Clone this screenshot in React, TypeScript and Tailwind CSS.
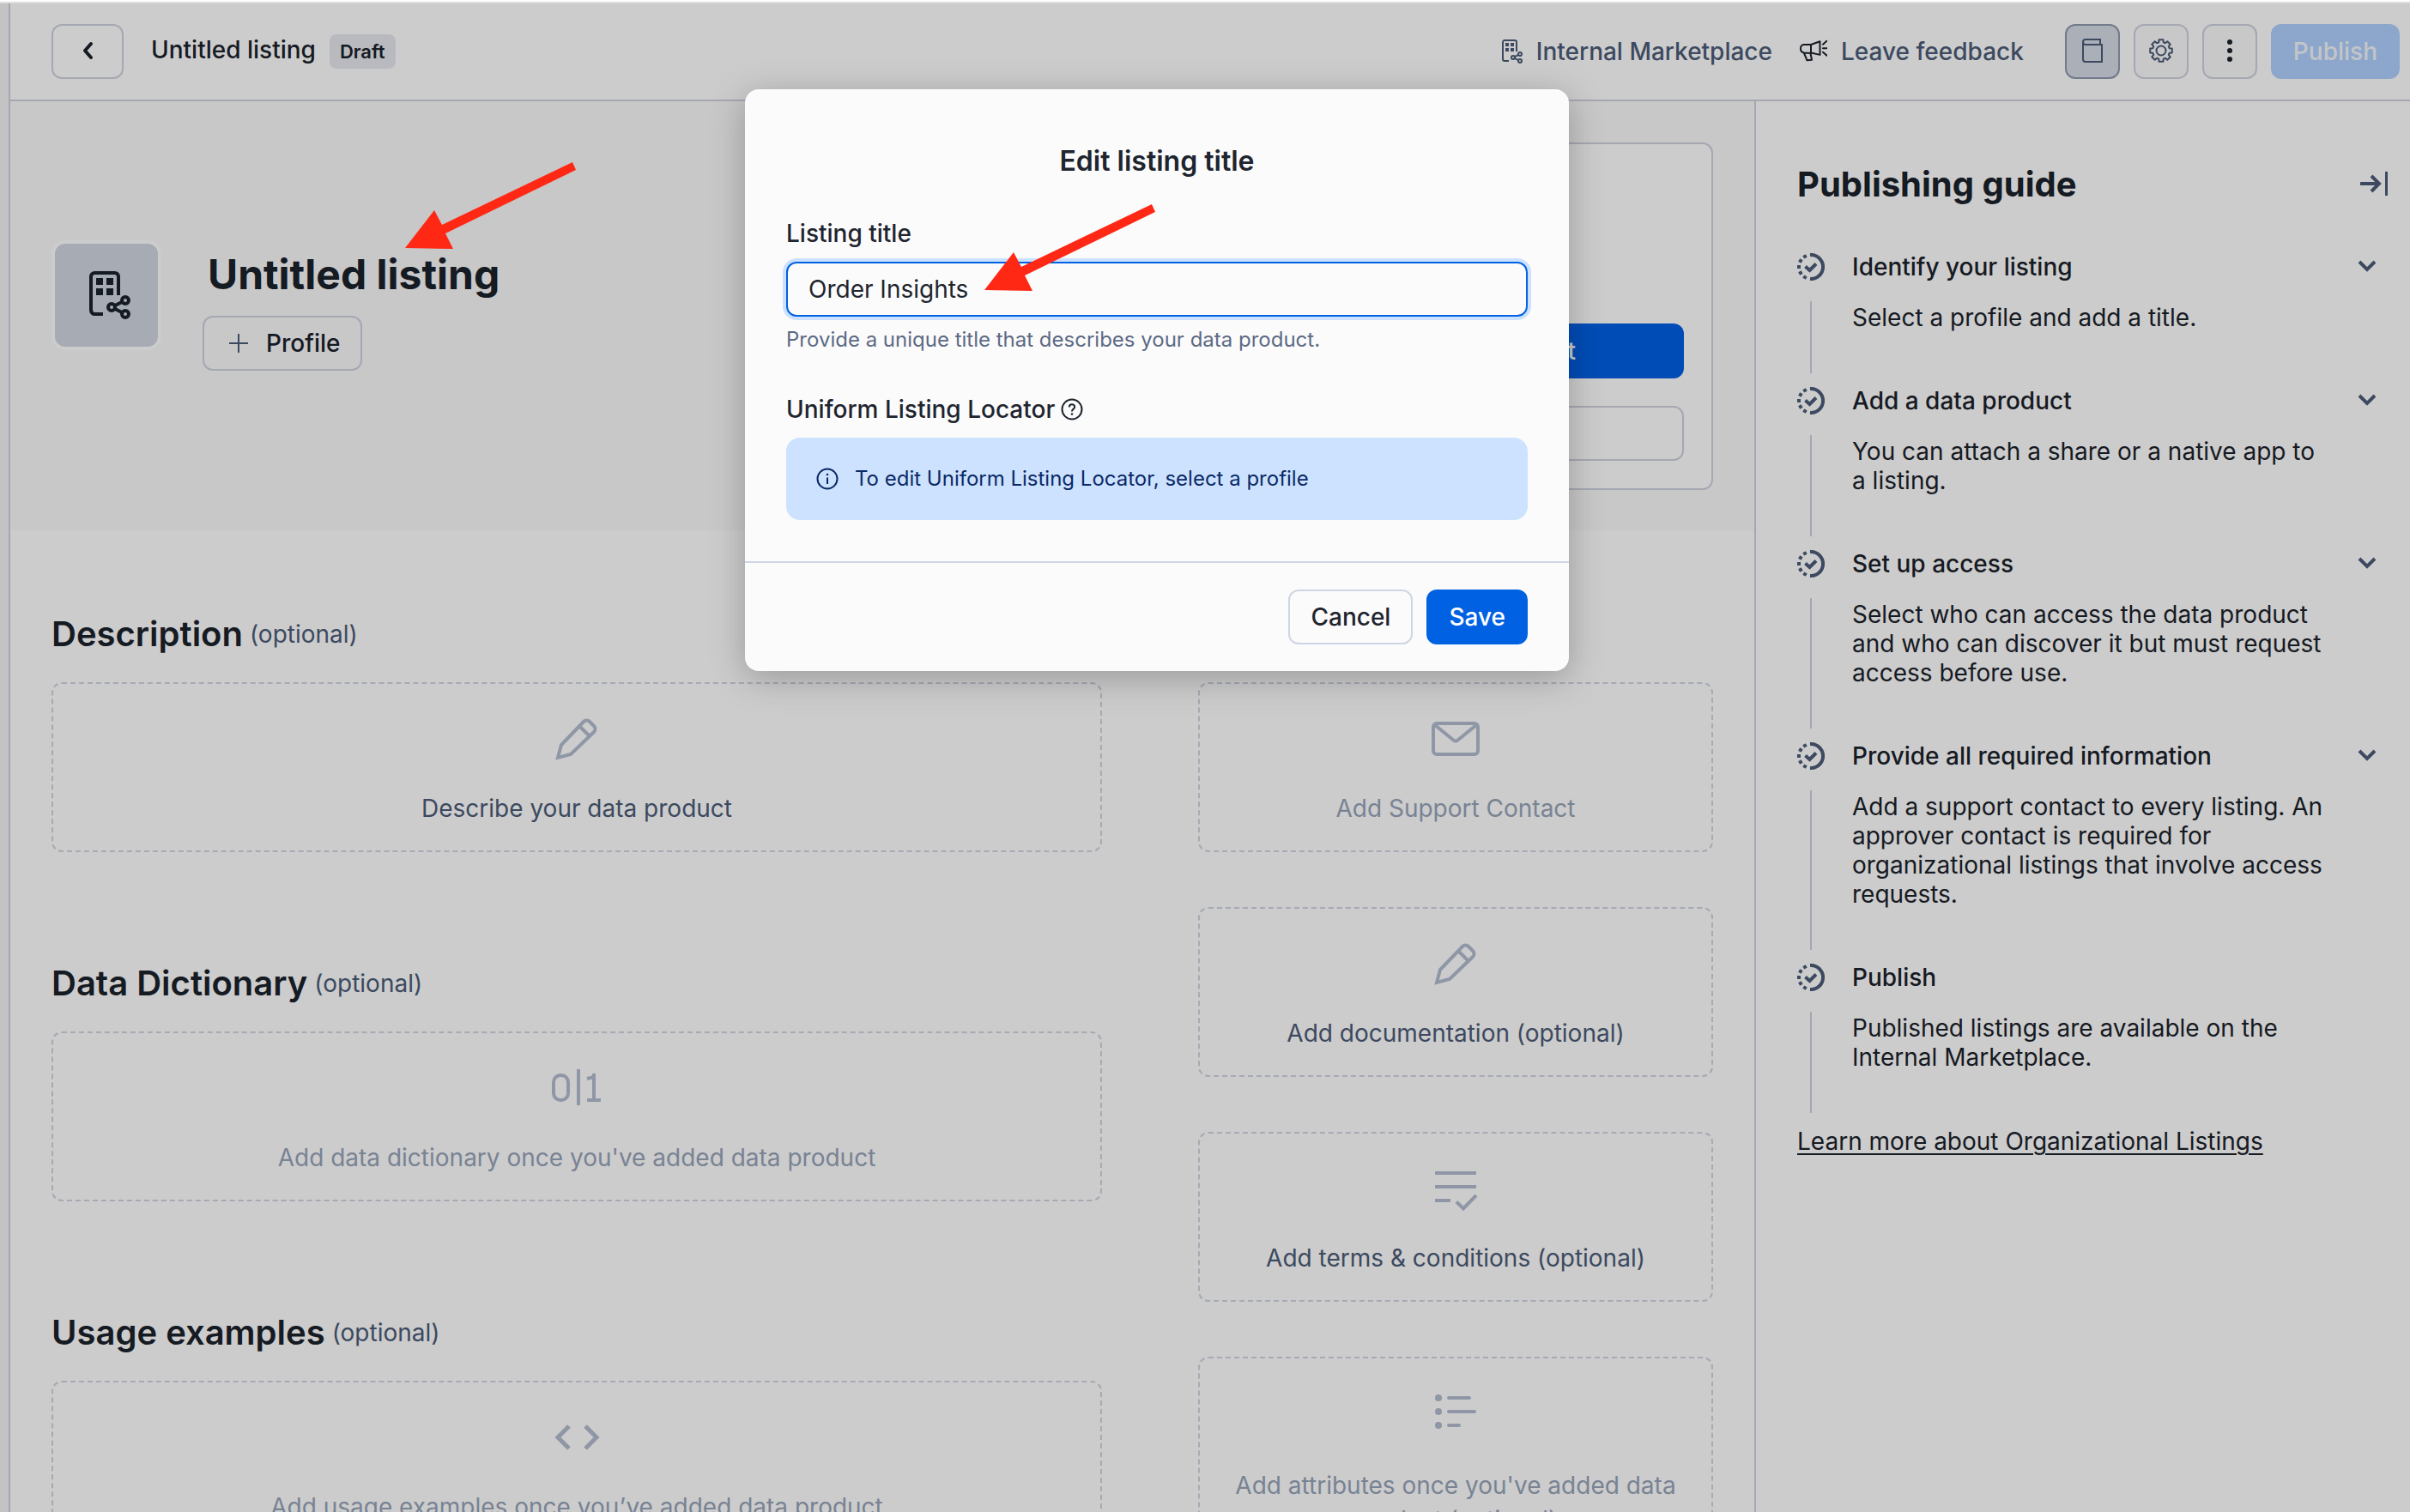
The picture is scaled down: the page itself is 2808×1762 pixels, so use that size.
import React from "react";

type IconProps = { className?: string };

function BuildingShareIcon({ className }: IconProps) {
  return (
    <svg viewBox="0 0 16 16" className={className} fill="none" stroke="currentColor" aria-hidden="true">
      <path d="M11.5 8V2.6a1.1 1.1 0 0 0-1.1-1.1H4.6a1.1 1.1 0 0 0-1.1 1.1v9.8a1.1 1.1 0 0 0 1.1 1.1H7" />
      <path d="M5 3h2v2H5zM8 3h2v2H8zM5 6h2v2H5zM8 6h2v2H8z" fill="currentColor" stroke="none" />
      <circle cx="9.5" cy="11.5" r="1" />
      <circle cx="13.5" cy="9.5" r="1" />
      <circle cx="13.5" cy="13.5" r="1" />
      <path d="M10.4 11.05l2.2-1.1M10.4 11.95l2.2 1.1" />
    </svg>
  );
}

function MegaphoneIcon({ className }: IconProps) {
  return (
    <svg viewBox="0 0 32 32" className={className} fill="none" stroke="currentColor" strokeWidth="2" strokeLinejoin="round" strokeLinecap="round" aria-hidden="true">
      <path d="M13 8H5a4 4 0 0 0-4 4v1c0 2.500 1.500 4 4 4.500L13 18zM13 8l10.500-3.700v15.600L13 17.500M5 18l3.500 8.300 5.500-.5-1.500-7.800" />
      <path d="M27 7.700l4.500-4M27 12.300h5M27 16.700l4.500 4" />
    </svg>
  );
}

function BookIcon({ className }: IconProps) {
  return (
    <svg viewBox="0 0 32 32" className={className} fill="none" stroke="currentColor" strokeWidth="2" aria-hidden="true">
      <path d="M25 8V2H8a3 3 0 0 0 0 6h19v20H8a3 3 0 0 1-3-3V5" />
    </svg>
  );
}

const gearPath = (() => {
  const points: string[] = [];
  const add = (radius: number, degrees: number) => {
    const angle = (degrees * Math.PI) / 180;
    points.push(`${(16 + radius * Math.cos(angle)).toFixed(2)} ${(15 + radius * Math.sin(angle)).toFixed(2)}`);
  };
  for (let tooth = 0; tooth < 8; tooth++) {
    const centre = tooth * 45;
    add(10, centre - 16);
    add(13, centre - 11);
    add(13, centre + 11);
    add(10, centre + 16);
  }
  return `M${points.join("L")}Z`;
})();

function GearIcon({ className }: IconProps) {
  return (
    <svg viewBox="0 0 32 32" className={className} fill="none" stroke="currentColor" strokeWidth="2" strokeLinejoin="round" aria-hidden="true">
      <path d={gearPath} />
      <circle cx="16" cy="15" r="5.500" />
    </svg>
  );
}

function DotsIcon({ className }: IconProps) {
  return (
    <svg viewBox="0 0 32 32" className={className} fill="currentColor" aria-hidden="true">
      <circle cx="16" cy="5" r="3" />
      <circle cx="16" cy="15" r="3" />
      <circle cx="16" cy="25" r="3" />
    </svg>
  );
}

function BackIcon({ className }: IconProps) {
  return (
    <svg viewBox="0 0 32 32" className={className} fill="none" stroke="currentColor" strokeWidth="4" strokeLinecap="round" strokeLinejoin="round" aria-hidden="true">
      <path d="M20 7l-7 8 7 8" />
    </svg>
  );
}

function PlusIcon({ className }: IconProps) {
  return (
    <svg viewBox="0 0 24 24" className={className} fill="none" stroke="currentColor" strokeWidth="2" aria-hidden="true">
      <path d="M12 1v22M1 12h22" />
    </svg>
  );
}

function CollapseIcon({ className }: IconProps) {
  return (
    <svg viewBox="0 0 32 32" className={className} fill="none" stroke="currentColor" strokeWidth="4" aria-hidden="true">
      <path d="M0 15h22M13 6l9 9-9 9" />
      <path d="M30.500 1v28" strokeWidth="3" />
    </svg>
  );
}

function ChevronIcon({ className }: IconProps) {
  return (
    <svg viewBox="0 0 32 32" className={className} fill="none" stroke="currentColor" strokeWidth="4" aria-hidden="true">
      <path d="M7 10l9 9 9-9" />
    </svg>
  );
}

function ProgressCheckIcon({ className }: IconProps) {
  return (
    <svg viewBox="0 0 32 32" className={className} fill="none" stroke="currentColor" strokeWidth="4" aria-hidden="true">
      <path d="M15 2.040A14 14 0 1 1 15 29.960" />
      <path d="M9.500 15.500l5 4.500 7.500-7.500" />
      <g fill="currentColor" stroke="none">
        {[-60, -30, 0, 30, 60].map((angle) => (
          <rect key={angle} x="0" y="14" width="4" height="4" transform={`rotate(${angle} 16 16)`} />
        ))}
      </g>
    </svg>
  );
}

function HelpIcon({ className }: IconProps) {
  return (
    <svg viewBox="0 0 28 28" className={className} fill="none" stroke="currentColor" strokeWidth="2" aria-hidden="true">
      <circle cx="14" cy="14" r="11.500" />
      <path d="M10.800 11.500c0-4.300 6.400-4.300 6.400-.3 0 2.300-3.200 2.600-3.200 5.200" />
      <circle cx="14" cy="19.500" r="1.300" fill="currentColor" stroke="none" />
    </svg>
  );
}

function InfoIcon({ className }: IconProps) {
  return (
    <svg viewBox="0 0 32 32" className={className} fill="none" stroke="currentColor" strokeWidth="2" aria-hidden="true">
      <circle cx="16" cy="16" r="11.500" />
      <path d="M16 14.500v7.500" />
      <circle cx="16" cy="11" r="1.300" fill="currentColor" stroke="none" />
    </svg>
  );
}

function PencilIcon({ className }: IconProps) {
  return (
    <svg viewBox="0 0 64 64" className={className} fill="none" stroke="currentColor" strokeWidth="4" aria-hidden="true">
      <path d="M10 54l4-15L40 12a5 5 0 0 1 7 0l5 5a5 5 0 0 1 0 7L25 50zM35 17l12 12" />
    </svg>
  );
}

function EnvelopeIcon({ className }: IconProps) {
  return (
    <svg viewBox="0 0 64 64" className={className} fill="none" stroke="currentColor" strokeWidth="4" strokeLinejoin="round" aria-hidden="true">
      <rect x="6" y="14" width="52" height="36" rx="4" />
      <path d="M8 16l21.500 17.500a4 4 0 0 0 5 0L56 16" />
    </svg>
  );
}

function BinaryIcon({ className }: IconProps) {
  return (
    <svg viewBox="0 0 64 64" className={className} fill="none" stroke="currentColor" strokeWidth="4" aria-hidden="true">
      <rect x="5" y="17" width="17" height="29" rx="8" />
      <line x1="34" y1="10" x2="34" y2="52" />
      <polyline points="44,21 52,19 52,46" />
      <line x1="44" y1="46" x2="60" y2="46" />
      <line x1="52" y1="15" x2="52" y2="20" />
    </svg>
  );
}

function CodeIcon({ className }: IconProps) {
  return (
    <svg viewBox="0 0 64 64" className={className} fill="none" stroke="currentColor" strokeWidth="5" aria-hidden="true">
      <path d="M23 19L10 32l13 13M42 19l13 13-13 13" />
    </svg>
  );
}

function ListCheckIcon({ className }: IconProps) {
  return (
    <svg viewBox="0 0 64 64" className={className} fill="none" stroke="currentColor" strokeWidth="4" aria-hidden="true">
      <path d="M8 14h48M8 30h48M8 46h18M33 47.500l8 8L56 40" />
    </svg>
  );
}

function ListIcon({ className }: IconProps) {
  return (
    <svg viewBox="0 0 64 64" className={className} fill="none" stroke="currentColor" strokeWidth="4" strokeLinecap="round" aria-hidden="true">
      <path d="M24 14h24M24 30h30M24 46h12" />
      <g fill="currentColor" stroke="none">
        <circle cx="12" cy="14" r="4" />
        <circle cx="12" cy="30" r="4" />
        <circle cx="12" cy="46" r="4" />
      </g>
    </svg>
  );
}

function RedArrow({ className }: IconProps) {
  return (
    <svg viewBox="0 0 200 104" className={className} fill="#ff2815" aria-hidden="true">
      <polygon points="0,101 34,57 43,74 195,1 199,10 47,84 56,102" />
    </svg>
  );
}

const steps = [
  { title: "Identify your listing", body: "Select a profile and add a title.", open: true },
  { title: "Add a data product", body: "You can attach a share or a native app to a listing.", open: true },
  {
    title: "Set up access",
    body: "Select who can access the data product and who can discover it but must request access before use.",
    open: true,
  },
  {
    title: "Provide all required information",
    body: "Add a support contact to every listing. An approver contact is required for organizational listings that involve access requests.",
    open: true,
  },
  { title: "Publish", body: "Published listings are available on the Internal Marketplace.", open: false },
];

type CardProps = {
  icon: (props: IconProps) => React.ReactElement;
  label: string;
  disabled?: boolean;
  multiline?: boolean;
};

function PlaceholderCard({ icon: Icon, label, disabled, multiline }: CardProps) {
  return (
    <button
      type="button"
      disabled={disabled}
      className="flex w-full shrink-0 flex-col items-center gap-8 rounded-xl border-2 border-dashed border-[#cfd5e0] p-8"
    >
      <Icon className="size-16 text-[#b3bdd0]" />
      <span
        className={
          (disabled ? "text-[#97a4b9] " : "text-[#4c5c78] ") + (multiline ? "leading-10" : "leading-[34px]")
        }
      >
        {label}
      </span>
    </button>
  );
}

function Section({ title, ...card }: CardProps & { title: string }) {
  return (
    <section className="flex flex-col gap-8">
      <div className="flex h-12 items-center gap-2">
        <h2 className="text-[40px] leading-[48px] font-semibold">{title}</h2>
        <span className="text-[#4c5c78]">(optional)</span>
      </div>
      <PlaceholderCard {...card} />
    </section>
  );
}

function Header() {
  return (
    <header className="flex h-[114px] shrink-0 items-center justify-between border-b-2 border-[#cfd3df] pr-3 pl-12">
      <div className="flex items-center">
        <button
          type="button"
          aria-label="Back"
          className="flex h-16 w-[84px] items-center justify-center rounded-xl border-2 border-[#cfd3df]"
        >
          <BackIcon className="size-8" />
        </button>
        <span className="mb-1 ml-8 font-medium">Untitled listing</span>
        <span className="ml-4 flex h-10 items-center rounded-lg bg-[#e7e9ef] px-3 text-[22px] font-semibold">Draft</span>
      </div>
      <div className="flex items-center gap-4 font-medium">
        <a href="#marketplace" className="flex items-center gap-[14px] text-[#4c5c78]">
          <BuildingShareIcon className="size-8" />
          Internal Marketplace
        </a>
        <a href="#feedback" className="mr-8 ml-4 flex items-center gap-4 text-[#4c5c78]">
          <MegaphoneIcon className="size-8 text-[#1b222b]" />
          Leave feedback
        </a>
        <button
          type="button"
          aria-label="Guide"
          className="flex size-16 items-center justify-center rounded-xl border-2 border-[#8e9ab0] bg-[#d6dbe6] text-[#4c5c78]"
        >
          <BookIcon className="size-8" />
        </button>
        <button
          type="button"
          aria-label="Settings"
          className="flex size-16 items-center justify-center rounded-xl border-2 border-[#cfd3df] bg-[#fafafa] text-[#4c5c78]"
        >
          <GearIcon className="size-8" />
        </button>
        <button
          type="button"
          aria-label="More"
          className="flex size-16 items-center justify-center rounded-xl border-2 border-[#cfd3df] bg-[#fafafa]"
        >
          <DotsIcon className="size-8" />
        </button>
        <button type="button" disabled className="h-16 rounded-xl bg-[#afd0ff] px-[26px] text-[#f5f7fb]">
          Publish
        </button>
      </div>
    </header>
  );
}

function Hero() {
  return (
    <div className="grid shrink-0 grid-cols-[1fr_600px] gap-28 bg-[#fafafa] px-12 pt-12 pb-[47px]">
      <div className="flex items-start gap-12 pt-[114px]">
        <div className="flex size-32 items-center justify-center rounded-2xl border-4 border-white bg-[#d0d6e2]">
          <BuildingShareIcon className="size-16" />
        </div>
        <div className="flex flex-col items-start gap-4 pt-2">
          <h1 className="pl-1.5 text-[48px] leading-[64px] font-bold">Untitled listing</h1>
          <button
            type="button"
            className="flex h-16 items-center gap-5 rounded-xl border-2 border-[#cfd3df] pr-6 pl-7 font-medium"
          >
            <PlusIcon className="size-6 text-[#4c5c78]" />
            Profile
          </button>
        </div>
      </div>
      <div className="flex h-[405px] flex-col justify-end gap-8 rounded-xl border-2 border-[#cfd3df] bg-white p-8">
        <button
          type="button"
          aria-label="Primary action"
          className="h-16 rounded-xl bg-[#0060e4] pr-[126px] text-right font-medium text-white"
        >
          t
        </button>
        <button type="button" aria-label="Secondary action" className="h-16 rounded-xl border-2 border-[#cfd3df]" />
      </div>
    </div>
  );
}

function Guide() {
  return (
    <aside className="w-[764px] shrink-0 border-l-2 border-[#cfd3df] pt-[73px] pr-[26px] pl-12">
      <div className="flex items-center justify-between">
        <h2 className="text-[40px] leading-[48px] font-bold">Publishing guide</h2>
        <button type="button" aria-label="Collapse guide" className="text-[#4c5c78]">
          <CollapseIcon className="size-8" />
        </button>
      </div>
      <ol className="mt-14">
        {steps.map((step) => (
          <li key={step.title} className="pb-4">
            <div className="flex h-8 items-center gap-8">
              <ProgressCheckIcon className="size-8 shrink-0 text-[#4c5c78]" />
              <h3 className="grow font-medium">{step.title}</h3>
              {step.open && (
                <button type="button" aria-label={"Toggle " + step.title} className="mr-2 text-[#4c5c78]">
                  <ChevronIcon className="size-8" />
                </button>
              )}
            </div>
            <div className="mt-6 ml-[15px] border-l-2 border-[#cfd3df] pt-0.5 pr-16 pb-12 pl-[47px]">
              <p>{step.body}</p>
            </div>
          </li>
        ))}
      </ol>
      <a href="#learn-more" className="underline decoration-2 underline-offset-4">
        Learn more about Organizational Listings
      </a>
    </aside>
  );
}

function EditTitleDialog() {
  return (
    <div
      role="dialog"
      aria-labelledby="dialog-title"
      className="w-[960px] rounded-2xl bg-[#fbfbfb] text-[#1e252f] shadow-[0_8px_40px_rgba(0,0,0,0.25)]"
    >
      <div className="px-12 pt-16 pb-12">
        <h2 id="dialog-title" className="text-center text-[32px] leading-10 font-semibold">
          Edit listing title
        </h2>
        <label htmlFor="listing-title" className="mt-[47px] block font-medium">
          Listing title
        </label>
        <div className="relative mt-4">
          <input
            id="listing-title"
            type="text"
            defaultValue="Order Insights"
            className="block h-16 w-full rounded-xl border-2 border-[#0062e3] bg-[#fbfbfb] px-6 ring-4 ring-[#cce1ff] outline-none"
          />
          <RedArrow className="absolute -top-[68px] left-[231px] w-[200px]" />
        </div>
        <p className="mt-3 text-2xl leading-[30px] text-[#5d6a85]">
          Provide a unique title that describes your data product.
        </p>
        <div className="mt-[49px] flex items-center gap-1.5 font-medium">
          Uniform Listing Locator
          <HelpIcon className="size-7" />
        </div>
        <div className="mt-4 flex h-24 items-center gap-4 rounded-2xl bg-[#cde2ff] px-8 text-2xl text-[#0a2a66]">
          <InfoIcon className="size-8" />
          To edit Uniform Listing Locator, select a profile
        </div>
      </div>
      <div className="flex justify-end gap-4 border-t-2 border-[#cfd6e3] px-12 py-[31px] font-medium">
        <button type="button" className="h-16 rounded-xl border-2 border-[#cfd6e3] px-6">
          Cancel
        </button>
        <button type="button" className="h-16 rounded-xl border-2 border-[#0062e3] bg-[#0062e3] px-6 text-white">
          Save
        </button>
      </div>
    </div>
  );
}

export default function App() {
  return (
    <div className="relative flex h-screen flex-col overflow-hidden bg-white font-['Inter',sans-serif] text-[28px] leading-[34px] text-[#1b222b]">
      <div className="h-1 shrink-0 border-b-2 border-[#dcdcdc]" />
      <div className="relative flex min-h-0 grow">
        <div className="w-3 shrink-0 border-r-2 border-[#cfd3df] bg-[#f4f4f4]" />
        <div className="flex min-w-0 grow flex-col">
          <Header />
          <div className="flex min-h-0 grow">
            <main className="flex min-w-0 grow flex-col overflow-hidden">
              <Hero />
              <div className="grid grid-cols-[1fr_600px] gap-28 px-12 pt-[97px]">
                <div className="flex flex-col gap-[129px]">
                  <Section title="Description" icon={PencilIcon} label="Describe your data product" />
                  <Section
                    title="Data Dictionary"
                    icon={BinaryIcon}
                    label="Add data dictionary once you've added data product"
                    disabled
                  />
                  <Section
                    title="Usage examples"
                    icon={CodeIcon}
                    label="Add usage examples once you’ve added data product"
                    disabled
                  />
                </div>
                <div className="flex flex-col gap-16 pt-20">
                  <PlaceholderCard icon={EnvelopeIcon} label="Add Support Contact" disabled />
                  <PlaceholderCard icon={PencilIcon} label="Add documentation (optional)" />
                  <PlaceholderCard icon={ListCheckIcon} label="Add terms & conditions (optional)" />
                  <PlaceholderCard
                    icon={ListIcon}
                    label="Add attributes once you've added data product (optional)"
                    disabled
                    multiline
                  />
                </div>
              </div>
            </main>
            <Guide />
          </div>
        </div>
        <div className="absolute inset-0 flex items-start justify-center bg-black/20 pt-[100px] pr-28">
          <EditTitleDialog />
        </div>
      </div>
      <RedArrow className="absolute top-[188px] left-[472px] w-[200px]" />
    </div>
  );
}
